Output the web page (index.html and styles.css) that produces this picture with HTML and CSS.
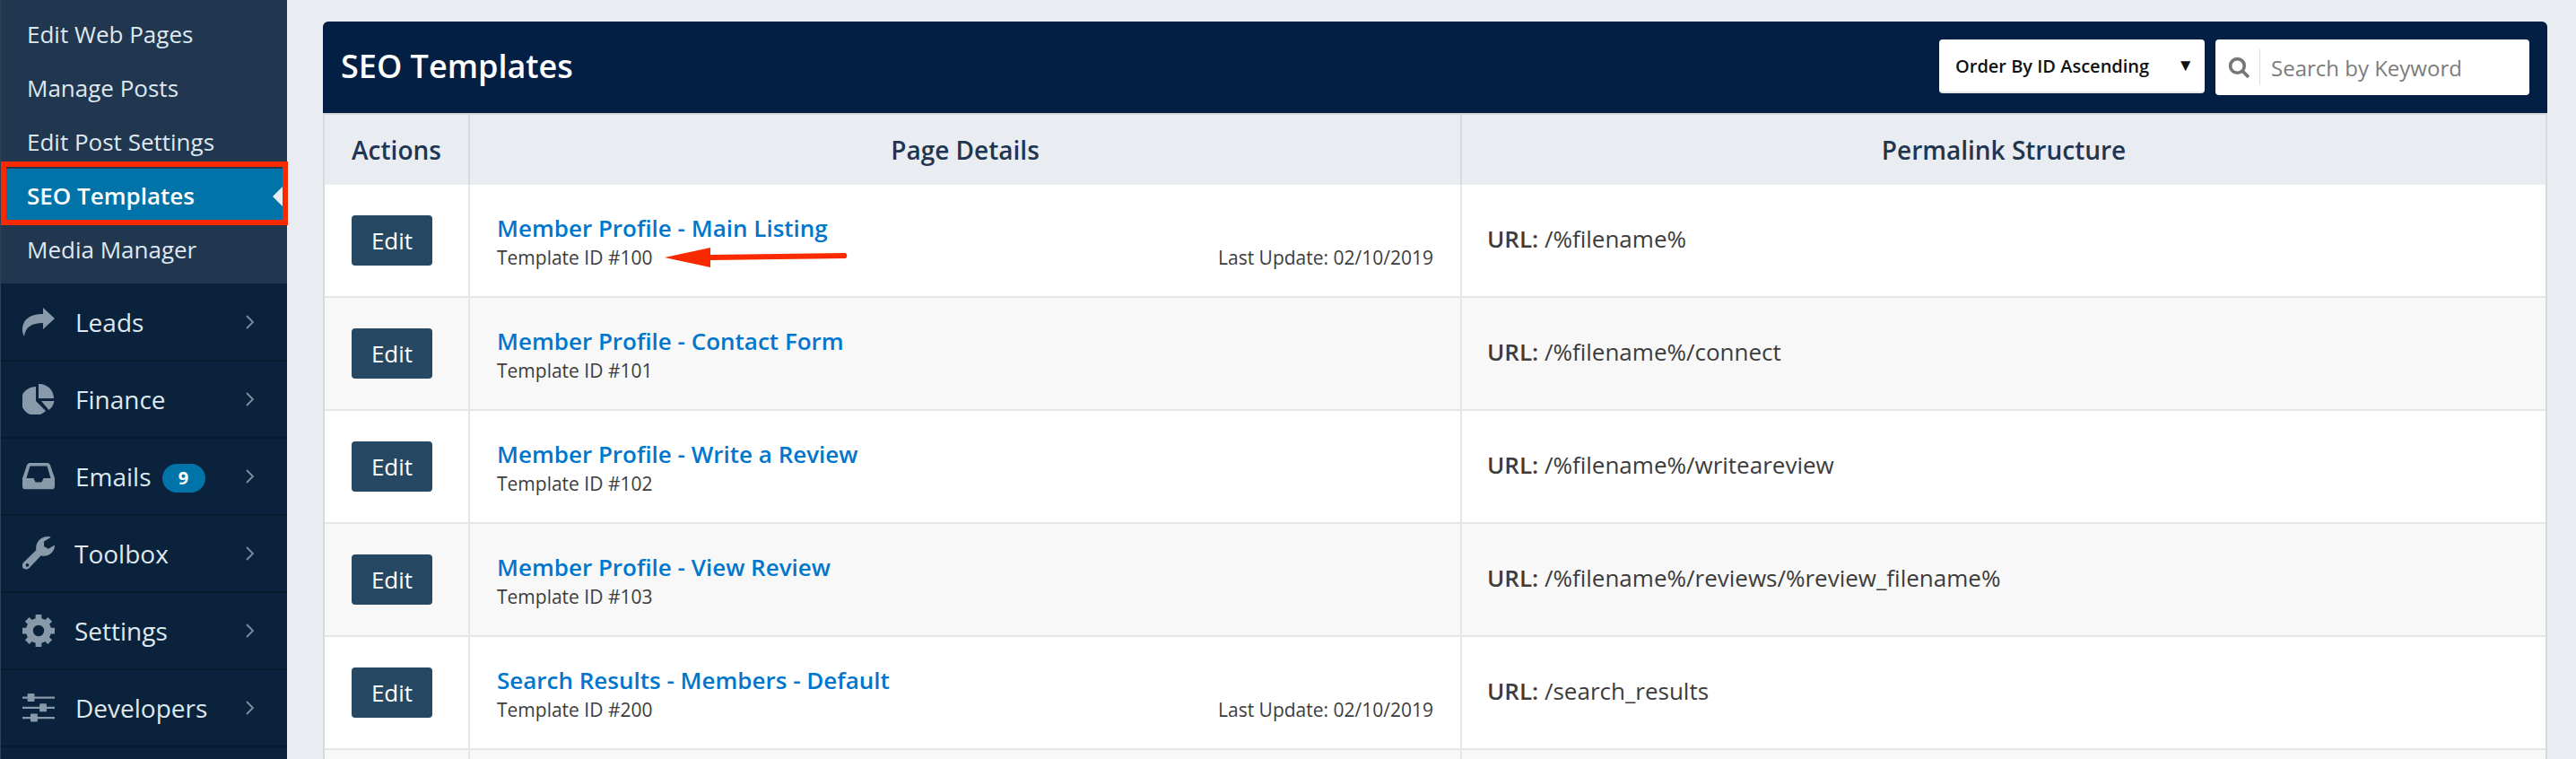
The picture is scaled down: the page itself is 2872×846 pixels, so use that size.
FILE: index.html
```html
<!DOCTYPE html>
<html lang="en">

<head>
    <meta charset="UTF-8">
    <meta name="viewport" content="width=device-width, initial-scale=1.0">
    <title>SEO Templates</title>
    <link rel="stylesheet" href="styles.css">
</head>

<body>
    <aside class="sidebar">
        <ul class="sub-menu">
            <li><a href="#">Edit Web Pages</a></li>
            <li><a href="#">Manage Posts</a></li>
            <li><a href="#">Edit Post Settings</a></li>
            <li class="active"><a href="#">SEO Templates</a></li>
            <li><a href="#">Media Manager</a></li>
        </ul>
        <ul class="main-menu">
            <li>
                <svg class="icon" viewBox="0 0 36 32"><path d="M36 12 23 0v7C10 7 0 12 0 25c0 3 1 5 2 7 1-10 8-15 21-15v7z"/></svg>
                <span>Leads</span>
                <svg class="chevron" viewBox="0 0 10 16"><path d="M1 1l7 7-7 7"/></svg>
            </li>
            <li>
                <svg class="icon" viewBox="0 0 36 34"><path d="M15 3v16l11 11a16 16 0 1 1-11-27z"/><path d="M18 0a16 16 0 0 1 17 16H18z"/><path d="M21 19h14.500a16 16 0 0 1-6 10z"/></svg>
                <span>Finance</span>
                <svg class="chevron" viewBox="0 0 10 16"><path d="M1 1l7 7-7 7"/></svg>
            </li>
            <li>
                <svg class="icon" viewBox="0 0 32 26"><path fill-rule="evenodd" d="M7 0h18c1 0 2 1 2.500 2L32 15v8c0 2-1 3-3 3H3c-2 0-3-1-3-3v-8L4.500 2C5 1 6 0 7 0zM7.500 3 4 15h7l2 4h6l2-4h7L24.500 3z"/></svg>
                <span>Emails</span>
                <b class="badge">9</b>
                <svg class="chevron" viewBox="0 0 10 16"><path d="M1 1l7 7-7 7"/></svg>
            </li>
            <li>
                <svg class="icon" viewBox="0 0 33 34"><path fill-rule="evenodd" d="M33 9c0 6-5 11-11 11-1 0-2 0-3-.500L7 32c-2 2-4 2-6 .5s-1.500-4 0-6L14 14c-1-6 3-14 12-14 1.500 0 3 .5 3 1l-7 4v5l4.500 2.500 6-3.500c.5 0 .5.500.5 1zM5 27.500a1.700 1.700 0 1 0 0 3.400 1.700 1.700 0 0 0 0-3.400z"/></svg>
                <span class="tight">Toolbox</span>
                <svg class="chevron" viewBox="0 0 10 16"><path d="M1 1l7 7-7 7"/></svg>
            </li>
            <li>
                <svg class="icon" viewBox="0 0 32 32">
                    <circle class="gear" cx="16" cy="16" r="9"/>
                    <path d="M13 0h6v6h-6zM13 26h6v6h-6zM0 13h6v6H0zM26 13h6v6h-6z"/>
                    <path transform="rotate(45 16 16)" d="M13 0h6v6h-6zM13 26h6v6h-6zM0 13h6v6H0zM26 13h6v6h-6z"/>
                </svg>
                <span class="tight">Settings</span>
                <svg class="chevron" viewBox="0 0 10 16"><path d="M1 1l7 7-7 7"/></svg>
            </li>
            <li>
                <svg class="icon" viewBox="0 0 32 28"><path d="M0 3h5V1c0-.500.500-1 1-1h5c.500 0 1 .500 1 1v2h20v2H12v2c0 .500-.500 1-1 1H6c-.500 0-1-.500-1-1V5H0zM0 13h17v-2c0-.500.500-1 1-1h5c.500 0 1 .500 1 1v2h8v2h-8v2c0 .500-.500 1-1 1h-5c-.500 0-1-.500-1-1v-2H0zM0 23h8v-2c0-.500.500-1 1-1h5c.500 0 1 .500 1 1v2h17v2H15v2c0 .500-.500 1-1 1H9c-.500 0-1-.500-1-1v-2H0z"/></svg>
                <span>Developers</span>
                <svg class="chevron" viewBox="0 0 10 16"><path d="M1 1l7 7-7 7"/></svg>
            </li>
        </ul>
    </aside>

    <main class="main">
        <div class="panel">
            <div class="panel-head">
                <h1>SEO Templates</h1>
                <div class="tools">
                    <div class="order-wrap">
                        <select class="order">
                            <option>Order By ID Ascending</option>
                        </select>
                    </div>
                    <div class="search">
                        <svg viewBox="0 0 24 24"><circle cx="10" cy="10" r="7.500"/><path d="M15.500 15.500 22 22"/></svg>
                        <input type="text" placeholder="Search by Keyword">
                    </div>
                </div>
            </div>
            <table class="templates">
                <thead>
                    <tr>
                        <th class="col-actions">Actions</th>
                        <th class="col-details">Page Details</th>
                        <th>Permalink Structure</th>
                    </tr>
                </thead>
                <tbody>
                    <tr>
                        <td class="col-actions"><button>Edit</button></td>
                        <td class="details">
                            <a href="#">Member Profile - Main Listing</a>
                            <div class="meta"><span>Template ID #100</span><span>Last Update: 02/10/2019</span>
                                <svg class="pointer" viewBox="0 0 204 22"><path d="M0 11 51 0v8l150-2c3 0 3 6 0 6L51 14v8z"/></svg>
                            </div>
                        </td>
                        <td class="url"><strong>URL:</strong> /%filename%</td>
                    </tr>
                    <tr>
                        <td class="col-actions"><button>Edit</button></td>
                        <td class="details">
                            <a href="#">Member Profile - Contact Form</a>
                            <div class="meta"><span>Template ID #101</span></div>
                        </td>
                        <td class="url"><strong>URL:</strong> /%filename%/connect</td>
                    </tr>
                    <tr>
                        <td class="col-actions"><button>Edit</button></td>
                        <td class="details">
                            <a href="#">Member Profile - Write a Review</a>
                            <div class="meta"><span>Template ID #102</span></div>
                        </td>
                        <td class="url"><strong>URL:</strong> /%filename%/writeareview</td>
                    </tr>
                    <tr>
                        <td class="col-actions"><button>Edit</button></td>
                        <td class="details">
                            <a href="#">Member Profile - View Review</a>
                            <div class="meta"><span>Template ID #103</span></div>
                        </td>
                        <td class="url"><strong>URL:</strong> /%filename%/reviews/%review_filename%</td>
                    </tr>
                    <tr>
                        <td class="col-actions"><button>Edit</button></td>
                        <td class="details">
                            <a href="#">Search Results - Members - Default</a>
                            <div class="meta"><span>Template ID #200</span><span>Last Update: 02/10/2019</span></div>
                        </td>
                        <td class="url"><strong>URL:</strong> /search_results</td>
                    </tr>
                    <tr class="cut-row">
                        <td></td>
                        <td></td>
                        <td></td>
                    </tr>
                </tbody>
            </table>
        </div>
    </main>
</body>

</html>
```

FILE: styles.css
```css
* {
    margin: 0;
    padding: 0;
    box-sizing: border-box;
}

html,
body {
    height: 846px;
    overflow: hidden;
}

body {
    display: flex;
    font-family: "Open Sans", "Liberation Sans", sans-serif;
    background-color: #e9edf2;
    color: #3c3c3c;
}

ul {
    list-style: none;
}

a {
    text-decoration: none;
}

/* sidebar */
.sidebar {
    width: 320px;
    flex-shrink: 0;
    background-color: #0a223b;
    border-left: 1px solid #2c4058;
}

.sub-menu {
    padding: 8px 0;
    background-color: #21364f;
}

.sub-menu li {
    height: 60px;
    line-height: 60px;
    padding-left: 29px;
    font-size: 26px;
}

.sub-menu a {
    color: #dfe8f0;
}

.sub-menu .active {
    position: relative;
    background-color: #0074a9;
}

.sub-menu .active a {
    color: #fff;
    font-weight: 600;
}

/* little notch on the right of the current page */
.sub-menu .active::before {
    content: "";
    position: absolute;
    right: 5px;
    top: 20px;
    border-style: solid;
    border-width: 11px 11px 11px 0;
    border-color: transparent #e9edf2 transparent transparent;
}

/* red box from the annotation */
.sub-menu .active::after {
    content: "";
    position: absolute;
    left: 0;
    right: -1px;
    top: -8px;
    bottom: -3px;
    border: 6px solid #fa2a00;
}

.main-menu {
    padding-top: 1px;
}

.main-menu li {
    display: flex;
    align-items: center;
    height: 86px;
    padding: 0 36px 0 24px;
    border-bottom: 2px solid #071a2e;
    font-size: 28px;
    color: #dfe8f0;
}

.icon {
    width: 36px;
    margin-right: 23px;
    fill: #8899a9;
    flex-shrink: 0;
}

.tight {
    margin-left: -1px;
}

.gear {
    fill: none;
    stroke: #8899a9;
    stroke-width: 7;
}

.chevron {
    width: 10px;
    height: 16px;
    margin-left: auto;
    fill: none;
    stroke: #7f8f9f;
    stroke-width: 1.800;
}

.badge {
    width: 48px;
    height: 32px;
    margin: 4px 0 0 12px;
    border-radius: 16px;
    background-color: #0074a9;
    color: #fff;
    font-size: 20px;
    line-height: 32px;
    text-align: center;
}

/* content */
.main {
    flex: 1;
    padding: 24px 32px 0 40px;
    min-width: 0;
}

.panel-head {
    display: flex;
    align-items: center;
    justify-content: space-between;
    height: 102px;
    padding: 0 20px;
    background-color: #041f44;
    border-radius: 6px 6px 0 0;
}

.panel-head h1 {
    margin-top: -3px;
    font-size: 36px;
    font-weight: 600;
    color: #fff;
}

.tools {
    display: flex;
    align-items: flex-start;
    gap: 12px;
}

.order-wrap {
    position: relative;
}

.order-wrap::after {
    content: "▼";
    position: absolute;
    right: 12px;
    top: 15px;
    font-size: 19px;
    color: #111;
    pointer-events: none;
}

.order {
    display: block;
    width: 296px;
    height: 60px;
    padding-left: 18px;
    appearance: none;
    border: 0;
    border-bottom: 2px solid #e4e6e9;
    border-radius: 4px;
    background-color: #fff;
    font-family: inherit;
    font-size: 20px;
    font-weight: 600;
    color: #111;
}

.search {
    display: flex;
    align-items: center;
    width: 350px;
    height: 62px;
    padding: 0 14px;
    border-radius: 4px;
    background-color: #fff;
}

.search svg {
    width: 25px;
    height: 25px;
    fill: none;
    stroke: #777;
    stroke-width: 3.500;
    flex-shrink: 0;
}

.search input {
    flex: 1;
    min-width: 0;
    height: 40px;
    margin-left: 10px;
    padding-left: 12px;
    border: 0;
    border-left: 1px solid #ddd;
    font-family: inherit;
    font-size: 24px;
    outline: none;
}

.search input::placeholder {
    color: #7c7c7c;
}

.templates {
    width: 100%;
    table-layout: fixed;
    border-collapse: separate;
    border-spacing: 0;
    border-left: 2px solid #d7d9dc;
    border-right: 2px solid #d7d9dc;
}

.templates th {
    height: 80px;
    border-top: 2px solid #d7d9dc;
    border-right: 2px solid #d7d9dc;
    background-color: #e9edf2;
    font-size: 28px;
    font-weight: 600;
    color: #1f3550;
}

.templates th:last-child,
.templates td:last-child {
    border-right: 0;
}

.templates td {
    height: 126px;
    border-right: 2px solid #e6e6e6;
    border-bottom: 2px solid #e6e6e6;
    background-color: #fff;
}

.templates tbody tr:nth-child(even) td {
    background-color: #f8f8f8;
}

.templates .cut-row td {
    height: 10px;
    border-bottom: 0;
}

.col-actions {
    width: 162px;
}

.col-details {
    width: 1106px;
}

.templates td.col-actions {
    padding-top: 34px;
    padding-left: 30px;
    vertical-align: top;
}

.templates button {
    display: block;
    width: 90px;
    height: 56px;
    border: 0;
    border-radius: 4px;
    background-color: #274862;
    color: #fff;
    font-family: inherit;
    font-size: 26px;
}

.templates td.details {
    padding: 33px 30px 0 30px;
    vertical-align: top;
}

.details a {
    display: block;
    line-height: 30px;
    font-size: 26px;
    font-weight: 600;
    color: #0076cc;
}

.meta {
    position: relative;
    display: flex;
    justify-content: space-between;
    margin-top: 4px;
    line-height: 28px;
    font-size: 21px;
    color: #3c3c3c;
}

/* red arrow from the annotation */
.pointer {
    position: absolute;
    left: 187px;
    top: 3px;
    width: 204px;
    height: 22px;
    fill: #fa2a00;
}

.templates td.url {
    padding-left: 28px;
    padding-bottom: 4px;
    font-size: 26px;
}

.url strong {
    font-weight: 600;
}
```
